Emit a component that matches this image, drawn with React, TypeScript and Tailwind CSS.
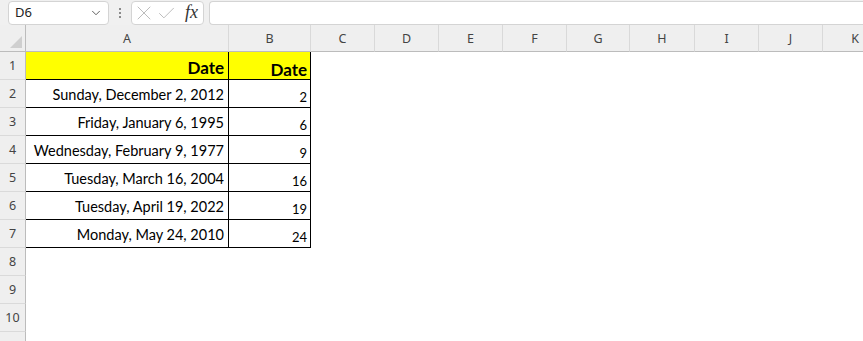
import React from 'react';
import { ChevronDown, X, Check } from 'lucide-react';

const COLS = ['A', 'B', 'C', 'D', 'E', 'F', 'G', 'H', 'I', 'J', 'K'];

const GRID =
  'grid grid-cols-[26px_203px_82px_64px_64px_64px_64px_63px_65px_64px_64px_64px]';

const ROWS: { a: string; b: string }[] = [
  { a: 'Sunday, December 2, 2012', b: '2' },
  { a: 'Friday, January 6, 1995', b: '6' },
  { a: 'Wednesday, February 9, 1977', b: '9' },
  { a: 'Tuesday, March 16, 2004', b: '16' },
  { a: 'Tuesday, April 19, 2022', b: '19' },
  { a: 'Monday, May 24, 2010', b: '24' },
];

const cellFont = "font-['Lato','Liberation_Sans',sans-serif] text-black";
const headFont = "font-['Noto_Sans','Liberation_Sans',sans-serif] text-[12.5px] text-[#444]";

const RowHead = ({ n }: { n?: number }) => (
  <div
    className={`h-[28px] border-r border-b border-r-[#bcbcbc] border-b-[#dadada] bg-[#efefef] flex items-center justify-center pt-[2px] ${headFont}`}
  >
    {n}
  </div>
);

const Empty = () => <div className="h-[28px]" />;

const FormulaBar = () => (
  <div className="h-[25px] bg-[#f0f0f0] flex items-start pt-[1px] pl-[8px]">
    {/* Name box */}
    <div className="w-[101px] h-[24px] bg-white border border-[#d4d4d4] rounded-[4px] flex items-center pl-[6px] pr-[5px]">
      <span className="flex-1 font-['Noto_Sans','Liberation_Sans',sans-serif] text-[13px] text-[#222]">D6</span>
      <ChevronDown size={14} strokeWidth={1.6} className="text-[#555]" />
    </div>
    {/* Grip dots */}
    <div className="w-[22px] h-[24px] flex flex-col items-center justify-center gap-[2px]">
      <div className="w-[2px] h-[2px] bg-[#8a8a8a]" />
      <div className="w-[2px] h-[2px] bg-[#8a8a8a]" />
      <div className="w-[2px] h-[2px] bg-[#8a8a8a]" />
    </div>
    {/* Cancel / Enter / fx */}
    <div className="w-[73px] h-[24px] bg-white border border-[#d4d4d4] rounded-[4px] flex items-center overflow-hidden">
      <X size={24} strokeWidth={0.9} className="shrink-0 text-[#b4b4b4]" />
      <Check size={21} strokeWidth={1} className="shrink-0 text-[#b4b4b4]" />
      <span className="font-['Liberation_Serif',serif] italic text-[18px] leading-none text-[#333] ml-[8px] mb-[2px]">
        fx
      </span>
    </div>
    {/* Formula input */}
    <div className="flex-1 ml-[5px] h-[24px] bg-white border border-[#d4d4d4] border-r-0 rounded-l-[4px]" />
  </div>
);

export default function App() {
  return (
    <div className="w-[863px] h-[341px] overflow-hidden bg-white">
      <FormulaBar />

      {/* Column headers */}
      <div className={GRID}>
        <div className="h-[27px] bg-[#efefef] border-r border-b border-r-[#bcbcbc] border-b-[#bcbcbc] flex items-end justify-end pr-[3px] pb-[3px]">
          <svg width="12" height="12" viewBox="0 0 12 12">
            <polygon points="12,0 12,12 0,12" fill="#cfcfcf" />
          </svg>
        </div>
        {COLS.map((c, i) => (
          <div
            key={c}
            className={`h-[27px] bg-[#efefef] border-b border-b-[#bcbcbc] flex items-center justify-center pt-[3px] ${headFont} ${
              i < COLS.length - 1 ? 'border-r border-r-[#d9d9d9]' : ''
            }`}
          >
            {c}
          </div>
        ))}
      </div>

      {/* Row 1: headers */}
      <div className={GRID}>
        <RowHead n={1} />
        <div
          className={`h-[28px] bg-[#ffff00] border-r border-b border-black flex items-end justify-end pr-[4px] pb-[3px] font-bold text-[17px] leading-none ${cellFont}`}
        >
          Date
        </div>
        <div
          className={`h-[28px] bg-[#ffff00] border-r border-b border-black flex items-end justify-end pr-[3px] pb-[1px] font-bold text-[17px] leading-none ${cellFont}`}
        >
          Date
        </div>
        {COLS.slice(2).map((c) => (
          <Empty key={c} />
        ))}
      </div>

      {ROWS.map((r, idx) => (
        <div key={idx} className={GRID}>
          <RowHead n={idx + 2} />
          <div
            className={`h-[28px] border-r border-b border-black flex items-end justify-end pr-[4px] pb-[5px] text-[14.5px] leading-none ${cellFont}`}
          >
            {r.a}
          </div>
          <div
            className={`h-[28px] border-r border-b border-black flex items-end justify-end pr-[3px] pb-[3px] text-[13px] leading-none ${cellFont}`}
          >
            {r.b}
          </div>
          {COLS.slice(2).map((c) => (
            <Empty key={c} />
          ))}
        </div>
      ))}

      {[8, 9, 10].map((n) => (
        <div key={n} className={GRID}>
          <RowHead n={n} />
        </div>
      ))}
      {/* partially visible row 11 */}
      <div className={GRID}>
        <RowHead />
      </div>
    </div>
  );
}
